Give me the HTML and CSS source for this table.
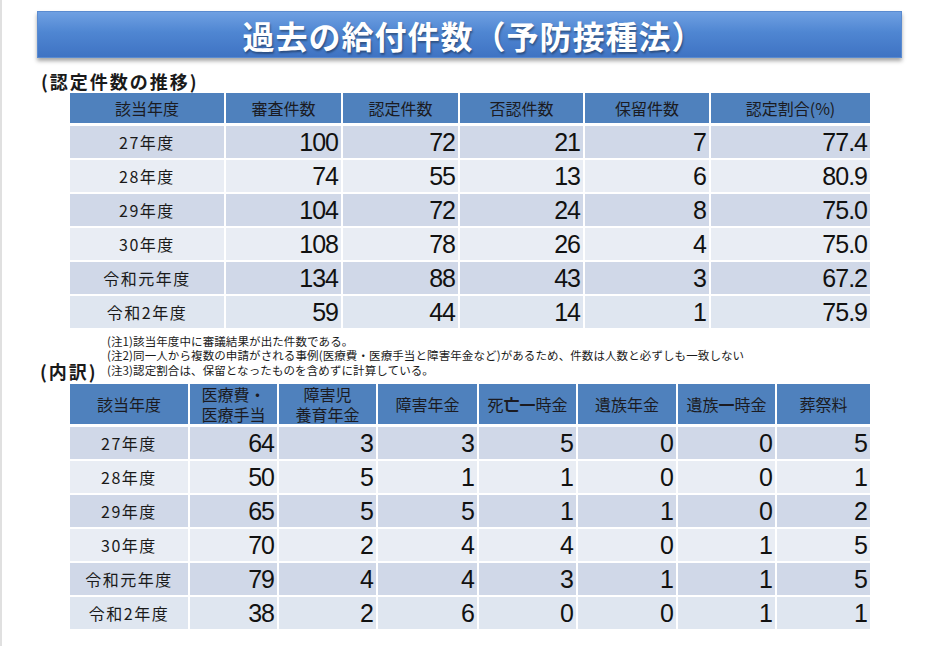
FILE: index.html
```html
<!DOCTYPE html>
<html lang="ja">
<head>
<meta charset="utf-8">
<title>過去の給付件数（予防接種法）</title>
<link rel="stylesheet" href="styles.css">
</head>
<body>
<div class="page">
  <div class="title-bar"><h1>過去の給付件数（予防接種法）</h1></div>

  <div class="section-label first">(認定件数の推移)</div>
  <table class="grid t1">
    <colgroup>
      <col class="a1"><col class="a2"><col class="a3"><col class="a4"><col class="a5"><col class="a6">
    </colgroup>
    <thead>
      <tr><th>該当年度</th><th>審査件数</th><th>認定件数</th><th>否認件数</th><th>保留件数</th><th>認定割合(%)</th></tr>
    </thead>
    <tbody>
      <tr><td class="yr">27年度</td><td class="n">100</td><td class="n">72</td><td class="n">21</td><td class="n">7</td><td class="n">77.4</td></tr>
      <tr><td class="yr">28年度</td><td class="n">74</td><td class="n">55</td><td class="n">13</td><td class="n">6</td><td class="n">80.9</td></tr>
      <tr><td class="yr">29年度</td><td class="n">104</td><td class="n">72</td><td class="n">24</td><td class="n">8</td><td class="n">75.0</td></tr>
      <tr><td class="yr">30年度</td><td class="n">108</td><td class="n">78</td><td class="n">26</td><td class="n">4</td><td class="n">75.0</td></tr>
      <tr><td class="yr">令和元年度</td><td class="n">134</td><td class="n">88</td><td class="n">43</td><td class="n">3</td><td class="n">67.2</td></tr>
      <tr><td class="yr">令和2年度</td><td class="n">59</td><td class="n">44</td><td class="n">14</td><td class="n">1</td><td class="n">75.9</td></tr>
    </tbody>
  </table>

  <div class="notes-row">
    <div class="section-label second">(内訳)</div>
    <div class="notes">
      <p>(注1)該当年度中に審議結果が出た件数である。</p>
      <p>(注2)同一人から複数の申請がされる事例(医療費・医療手当と障害年金など)があるため、件数は人数と必ずしも一致しない</p>
      <p>(注3)認定割合は、保留となったものを含めずに計算している。</p>
    </div>
  </div>

  <table class="grid t2">
    <colgroup>
      <col class="b1"><col class="b2"><col class="b3"><col class="b4"><col class="b5"><col class="b6"><col class="b7"><col class="b8">
    </colgroup>
    <thead>
      <tr>
        <th>該当年度</th>
        <th><span class="ln">医療費・</span><span class="ln">医療手当</span></th>
        <th><span class="ln">障害児</span><span class="ln">養育年金</span></th>
        <th>障害年金</th>
        <th>死<b>亡一</b>時金</th>
        <th>遺族年金</th>
        <th>遺族<b>一</b>時金</th>
        <th>葬祭料</th>
      </tr>
    </thead>
    <tbody>
      <tr><td class="yr">27年度</td><td class="n">64</td><td class="n">3</td><td class="n">3</td><td class="n">5</td><td class="n">0</td><td class="n">0</td><td class="n">5</td></tr>
      <tr><td class="yr">28年度</td><td class="n">50</td><td class="n">5</td><td class="n">1</td><td class="n">1</td><td class="n">0</td><td class="n">0</td><td class="n">1</td></tr>
      <tr><td class="yr">29年度</td><td class="n">65</td><td class="n">5</td><td class="n">5</td><td class="n">1</td><td class="n">1</td><td class="n">0</td><td class="n">2</td></tr>
      <tr><td class="yr">30年度</td><td class="n">70</td><td class="n">2</td><td class="n">4</td><td class="n">4</td><td class="n">0</td><td class="n">1</td><td class="n">5</td></tr>
      <tr><td class="yr">令和元年度</td><td class="n">79</td><td class="n">4</td><td class="n">4</td><td class="n">3</td><td class="n">1</td><td class="n">1</td><td class="n">5</td></tr>
      <tr><td class="yr">令和2年度</td><td class="n">38</td><td class="n">2</td><td class="n">6</td><td class="n">0</td><td class="n">0</td><td class="n">1</td><td class="n">1</td></tr>
    </tbody>
  </table>
</div>
</body>
</html>
```

FILE: styles.css
```css
* { box-sizing: border-box; }

html, body {
  margin: 0;
  padding: 0;
  background: #ffffff;
}

body {
  font-family: "Noto Sans CJK JP", "Noto Sans", sans-serif;
  color: #1a1a1a;
}

.page {
  width: 936px;
  height: 646px;
  border-left: 2px solid #e0e0e0;
  padding-top: 11px;
  overflow: hidden;
}

.title-bar {
  margin-left: 35px;
  width: 865px;
  height: 47px;
  background: linear-gradient(to bottom, #6fa0e2 0%, #4f86d2 45%, #3f73c3 100%);
  border: 1px solid #5a8bd0;
  box-shadow: 0 3px 4px rgba(0, 0, 0, 0.35);
  display: flex;
  align-items: center;
  justify-content: center;
}

.title-bar h1 {
  margin: 0;
  color: #ffffff;
  font-size: 32px;
  font-weight: 700;
  line-height: 1;
  letter-spacing: 1px;
  padding-left: 8px;
  text-shadow: 1px 2px 2px rgba(0, 0, 0, 0.35);
}

.section-label {
  font-size: 18px;
  font-weight: 700;
  color: #1a1a1a;
  line-height: 19px;
  letter-spacing: 2px;
}

.section-label.first {
  margin: 14px 0 0 39px;
}

.grid {
  margin-left: 66px;
  width: 802px;
  border-collapse: collapse;
  table-layout: fixed;
}

.grid th,
.grid td {
  border: 2px solid #ffffff;
  padding: 0;
}

.grid th {
  background: #4f81bd;
  font-size: 16px;
  font-weight: 400;
  color: #1b1b22;
  text-align: center;
}

.grid th b {
  font-weight: 700;
}

.grid th .ln {
  display: block;
  line-height: 20px;
}

.grid thead tr th {
  border-bottom-width: 3px;
}

.grid tbody tr:nth-child(odd) td { background: #d0d8e8; }
.grid tbody tr:nth-child(even) td { background: #e9edf4; }
.grid tbody tr:last-child td { background: #dfe6f0; }

.grid td {
  line-height: 32px;
  height: 34px;
}

.grid td.yr {
  text-align: center;
  font-size: 16px;
  letter-spacing: 1.5px;
  color: #1a1a1a;
}

.grid td.n {
  text-align: right;
  font-family: "Liberation Sans", Arial, sans-serif;
  font-size: 25px;
  letter-spacing: -1px;
  padding-right: 3px;
  color: #111111;
}

.t1 th {
  height: 32px;
  line-height: 28px;
}

.t1 .a1 { width: 156px; }
.t1 .a2 { width: 117px; }
.t1 .a3 { width: 117px; }
.t1 .a4 { width: 125px; }
.t1 .a5 { width: 126px; }
.t1 .a6 { width: 161px; }

.notes-row {
  display: flex;
  align-items: flex-end;
  margin-top: 4px;
}

.section-label.second {
  width: 67px;
  margin-left: 38px;
  line-height: 16px;
  position: relative;
  top: 2px;
}

.notes {
  font-size: 11.5px;
  line-height: 14.5px;
  color: #1a1a1a;
  letter-spacing: 0.1px;
}

.notes p {
  margin: 0;
}

.t2 {
  margin-top: 5px;
}

.t2 th {
  height: 40px;
  line-height: 20px;
}

.t2 .b1 { width: 120px; }
.t2 .b2 { width: 89px; }
.t2 .b3 { width: 99px; }
.t2 .b4 { width: 101px; }
.t2 .b5 { width: 99px; }
.t2 .b6 { width: 100px; }
.t2 .b7 { width: 99px; }
.t2 .b8 { width: 95px; }
```
